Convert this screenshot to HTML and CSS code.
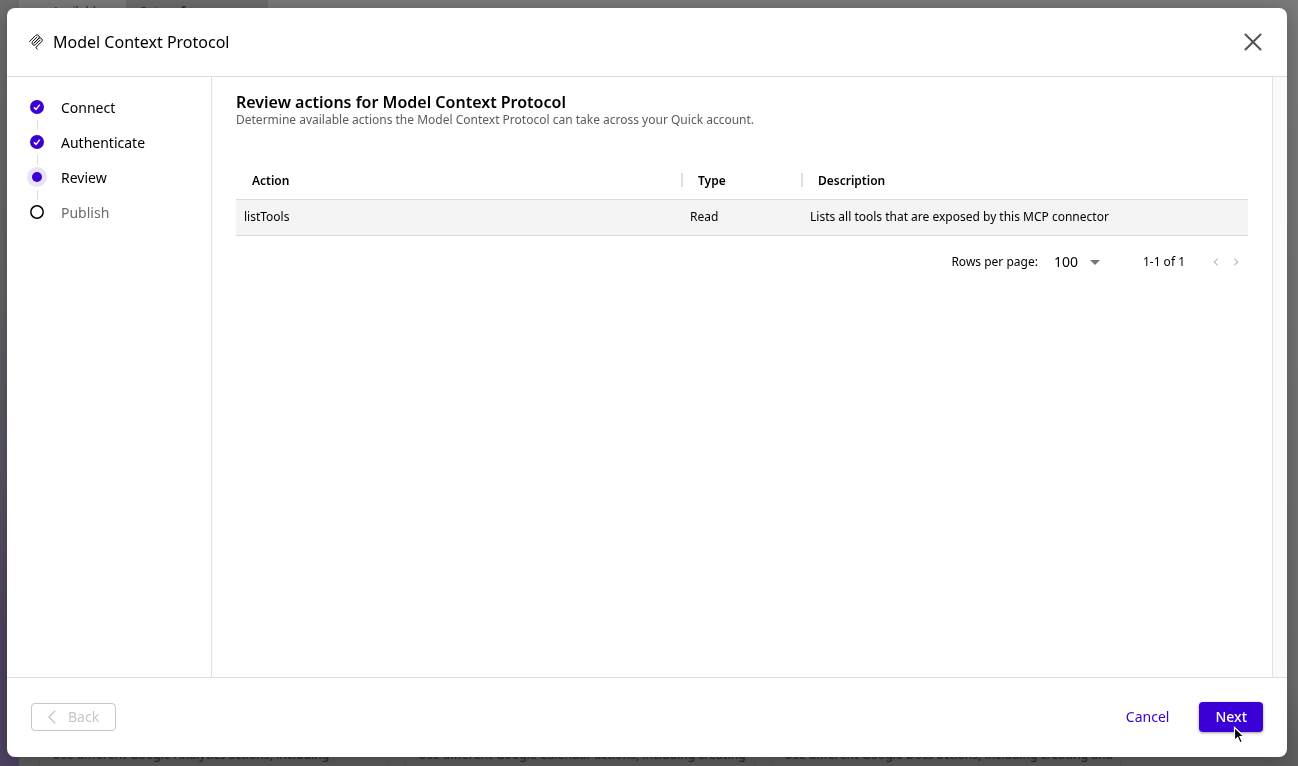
FILE: index.html
```html
<!DOCTYPE html>
<html lang="en">
<head>
  <meta charset="UTF-8">
  <meta name="viewport" content="width=device-width, initial-scale=1.0">
  <title>Model Context Protocol</title>
  <link rel="stylesheet" href="styles.css">
</head>
<body>
  <div class="page" aria-hidden="true">
    <div class="rail"></div>
    <div class="page-main">
      <div class="tabs">
        <div class="tab">Available</div>
        <div class="tab tab-active">Set up for you</div>
      </div>
      <div class="cards">
        <div class="card">Use different Google Analytics actions, including</div>
        <div class="card">Use different Google Calendar actions, including creating</div>
        <div class="card">Use different Google Docs actions, including creating and</div>
      </div>
    </div>
  </div>

  <div class="overlay">
    <div class="dialog" role="dialog" aria-labelledby="dialog-title">
      <header class="dialog-header">
        <svg class="logo" viewBox="0 0 180 180" fill="none" stroke="currentColor" stroke-width="11" stroke-linecap="round">
          <path d="M18 84.85L85.88 16.97C95.25 7.6 110.45 7.6 119.82 16.97C129.2 26.34 129.2 41.54 119.82 50.91L68.56 102.18"/>
          <path d="M69.27 101.47L119.82 50.91C129.2 41.54 144.39 41.54 153.77 50.91L154.12 51.27C163.49 60.64 163.49 75.83 154.12 85.21L92.72 146.6C89.6 149.72 89.6 154.79 92.72 157.91L105.33 170.52"/>
          <path d="M102.85 33.94L52.65 84.15C43.28 93.52 43.28 108.71 52.65 118.09C62.02 127.46 77.22 127.46 86.59 118.09L136.79 67.88"/>
        </svg>
        <h1 class="dialog-title" id="dialog-title">Model Context Protocol</h1>
        <button class="close" type="button" aria-label="Close">
          <svg width="18" height="18" viewBox="0 0 18 18" stroke="currentColor" stroke-width="2" stroke-linecap="round"><path d="M1.5 1.5l15 15M16.5 1.5l-15 15"/></svg>
        </button>
      </header>

      <div class="dialog-body">
        <ol class="steps">
          <li class="step">
            <svg class="step-icon" viewBox="0 0 20 20"><circle cx="10" cy="10" r="7" fill="#3a00d6"/><path d="M7 10.4l2 2 3.8-4.8" fill="none" stroke="#fff" stroke-width="1.5"/></svg>
            Connect
          </li>
          <li class="step">
            <svg class="step-icon" viewBox="0 0 20 20"><circle cx="10" cy="10" r="7" fill="#3a00d6"/><path d="M7 10.4l2 2 3.8-4.8" fill="none" stroke="#fff" stroke-width="1.5"/></svg>
            Authenticate
          </li>
          <li class="step">
            <svg class="step-icon" viewBox="0 0 20 20"><circle cx="10" cy="10" r="10" fill="#e9e3fa"/><circle cx="10" cy="10" r="5" fill="#3a00d6"/></svg>
            Review
          </li>
          <li class="step step-todo">
            <svg class="step-icon" viewBox="0 0 20 20"><circle cx="10" cy="10" r="6.2" fill="none" stroke="#000" stroke-width="1.5"/></svg>
            Publish
          </li>
        </ol>

        <main class="content">
          <h2 class="content-title">Review actions for Model Context Protocol</h2>
          <p class="content-text">Determine available actions the Model Context Protocol can take across your Quick account.</p>

          <table class="actions">
            <thead>
              <tr>
                <th>Action</th>
                <th class="col-type">Type</th>
                <th class="col-description">Description</th>
              </tr>
            </thead>
            <tbody>
              <tr>
                <td>listTools</td>
                <td>Read</td>
                <td>Lists all tools that are exposed by this MCP connector</td>
              </tr>
            </tbody>
          </table>

          <div class="pager">
            <label for="rows">Rows per page:</label>
            <div class="select-wrap">
              <select class="rows" id="rows">
                <option>100</option>
              </select>
              <svg class="caret" width="10" height="5" viewBox="0 0 10 5"><path d="M0 0h10L5 5z" fill="#757575"/></svg>
            </div>
            <span class="range">1-1 of 1</span>
            <button class="pager-btn" type="button" aria-label="Previous page" disabled>
              <svg width="6" height="8" viewBox="0 0 6 8" fill="none" stroke="currentColor" stroke-width="1.3"><path d="M4.6.6L1.2 4l3.4 3.4"/></svg>
            </button>
            <button class="pager-btn" type="button" aria-label="Next page" disabled>
              <svg width="6" height="8" viewBox="0 0 6 8" fill="none" stroke="currentColor" stroke-width="1.3"><path d="M1.4.6L4.8 4 1.4 7.4"/></svg>
            </button>
          </div>
        </main>
        <div class="scroll-track"></div>
      </div>

      <footer class="dialog-footer">
        <button class="btn btn-back" type="button" disabled>
          <svg width="8" height="14" viewBox="0 0 8 14" fill="none" stroke="currentColor" stroke-width="1.3"><path d="M7.2.8L1 7l6.2 6.2"/></svg>
          Back
        </button>
        <button class="btn btn-cancel" type="button">Cancel</button>
        <button class="btn btn-next" type="button">
          Next
          <svg class="cursor" width="14" height="20" viewBox="0 0 14 20"><path d="M1.5 1.5v13l3.2-3 2.3 5.3 2.3-1-2.3-5.1h4.3z" fill="#000" stroke="#fff" stroke-width="1.2"/></svg>
        </button>
      </footer>
    </div>
  </div>
</body>
</html>
```

FILE: styles.css
```css
* {
  box-sizing: border-box;
}
body {
  margin: 0;
  font-family: "Noto Sans", "Open Sans", sans-serif;
  font-size: 12px;
  color: #000;
}
button, select {
  font: inherit;
  color: inherit;
  border: 0;
  padding: 0;
  background: none;
}
svg {
  display: block;
  flex: none;
}

/* dimmed page under the dialog */
.page {
  display: flex;
  height: 100vh;
  overflow: hidden;
  background: linear-gradient(#7b7b7b, #6c6c6c 90%, #5e5e5e);
  color: #2c2c2c;
}
.rail {
  width: 19px;
  background: linear-gradient(#6e6e6e, #666 35%, #4f4362 85%);
}
.page-main {
  flex: 1;
  display: flex;
  flex-direction: column;
  justify-content: space-between;
}
.tabs {
  display: flex;
  line-height: 24px;
}
.tab {
  width: 107px;
  padding-left: 33px;
}
.tab-active {
  width: 142px;
  padding-left: 14px;
  background: #6c6c6c;
  font-weight: 700;
}
.cards {
  display: flex;
  gap: 16px;
  padding: 0 20px;
}
.card {
  width: 350px;
  padding: 20px 12px 2px;
  border: solid #585858;
  border-width: 0 1px;
  font-weight: 500;
  line-height: 18px;
  white-space: nowrap;
}

.overlay {
  position: fixed;
  inset: 0;
  display: flex;
  padding: 8px 11px 9px 7px;
}
.dialog {
  flex: 1;
  display: flex;
  flex-direction: column;
  background: #fff;
  border-radius: 8px;
  box-shadow: 0 4px 20px rgba(0, 0, 0, 0.3);
}
.dialog-header {
  display: flex;
  align-items: center;
  padding: 22px 25px 22px 21px;
  border-bottom: 1px solid #dedede;
}
.logo {
  width: 16px;
  height: 16px;
  margin-right: 9px;
}
.dialog-title {
  margin: 0;
  font-size: 16px;
  font-weight: 450;
  line-height: 24px;
}
.close {
  margin-left: auto;
  color: #545454;
}

.dialog-body {
  flex: 1;
  display: flex;
}
.steps {
  width: 205px;
  margin: 0;
  padding: 20px;
  border-right: 1px solid #dedede;
  list-style: none;
  font-size: 14px;
  font-weight: 450;
  line-height: 22px;
}
.step {
  display: flex;
  gap: 14px;
  position: relative;
  margin-bottom: 13px;
}
.step + .step::before {
  content: "";
  position: absolute;
  left: 10px;
  top: -12px;
  height: 10px;
  border-left: 1px solid #dedede;
}
.step-todo {
  color: #6b6b6b;
}
.step-icon {
  width: 20px;
  height: 20px;
}

.content {
  flex: 1;
  padding: 16px 24px;
}
.content-title {
  margin: 0;
  font-size: 16px;
  font-weight: 600;
  line-height: 18px;
}
.content-text {
  margin: 0 0 32px;
  line-height: 18px;
  color: #5c5c5c;
}
.actions {
  width: 100%;
  table-layout: fixed;
  border-collapse: collapse;
  text-align: left;
  line-height: 18px;
}
.actions th {
  position: relative;
  padding: 11px 16px 9px;
  font-weight: 650;
}
.actions th + th::before {
  content: "";
  position: absolute;
  left: -1px;
  top: 12px;
  height: 14px;
  border-left: 2px solid #dedede;
}
.col-type {
  width: 120px;
}
.col-description {
  width: 446px;
}
.actions td {
  padding: 8px 8px 9px;
  background: #f4f4f4;
  border: solid #dadada;
  border-width: 1px 0;
}

.pager {
  display: flex;
  align-items: center;
  justify-content: flex-end;
  padding: 14px 9px;
  line-height: 24px;
}
.select-wrap {
  position: relative;
  margin: 0 43px 0 16px;
}
.rows {
  appearance: none;
  display: block;
  width: 46px;
  height: 24px;
  font-size: 14px;
  font-weight: 450;
}
.caret {
  position: absolute;
  right: 0;
  top: 10px;
  pointer-events: none;
}
.range {
  margin-right: 14px;
}
.pager-btn {
  margin-left: 14px;
  color: #bdbdbd;
}

.dialog-footer {
  display: flex;
  align-items: center;
  padding: 24px 24px 25px;
  border-top: 1px solid #dedede;
}
.scroll-track {
  width: 15px;
  background: #fafafa;
  border-left: 1px solid #e3e3e3;
}
.btn {
  display: flex;
  align-items: center;
  justify-content: center;
  font-size: 14px;
  font-weight: 450;
  line-height: 20px;
  padding: 5px 16px;
  border-radius: 4px;
}
.btn-back {
  gap: 12px;
  padding: 3px 16px;
  border: 1px solid #c6c6c6;
  color: #c6c6c6;
}
.btn-cancel {
  margin-left: auto;
  margin-right: 14px;
  color: #3a00d6;
}
.btn-next {
  position: relative;
  background: #3a00d6;
  color: #fff;
  font-weight: 500;
  box-shadow: 0 1px 3px rgba(0, 0, 0, 0.4);
}
.cursor {
  position: absolute;
  left: 34px;
  top: 24px;
}
```
